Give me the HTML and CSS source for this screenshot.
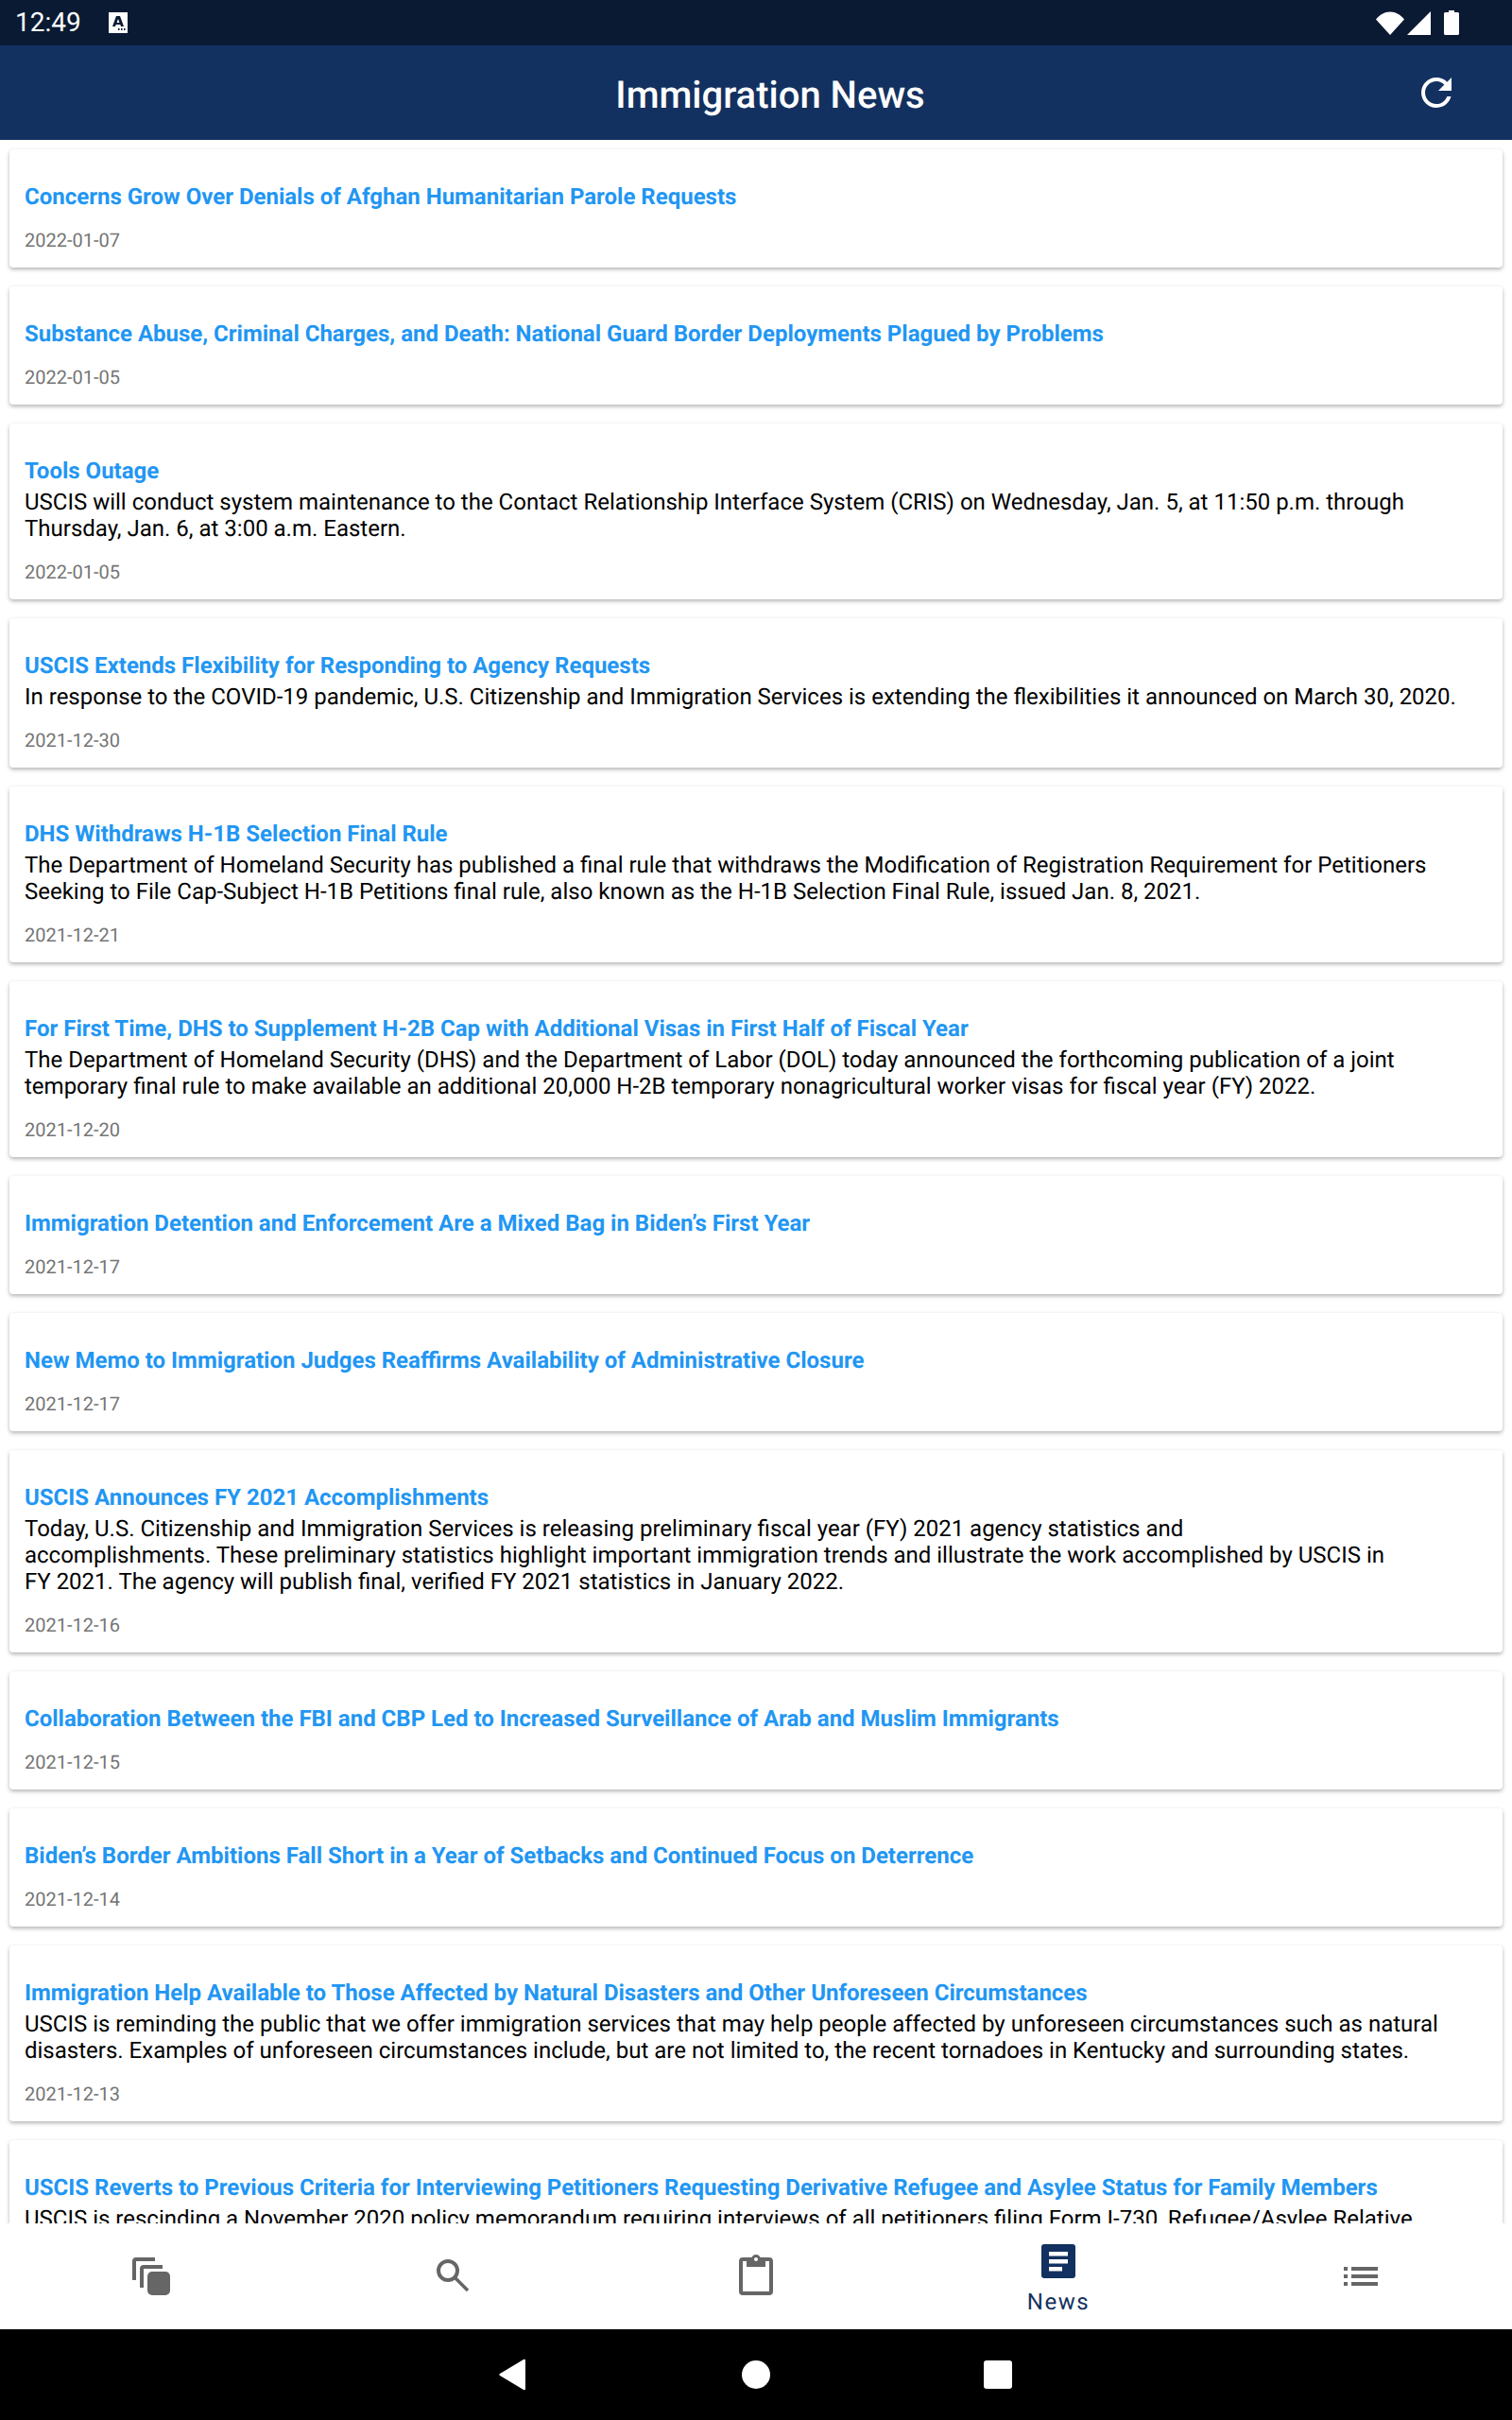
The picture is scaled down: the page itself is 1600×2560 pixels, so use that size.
FILE: index.html
```html
<!DOCTYPE html>
<html lang="en">
<head>
  <meta charset="UTF-8">
  <meta name="viewport" content="width=device-width, initial-scale=1.0">
  <title>Immigration News</title>
  <link rel="stylesheet" href="styles.css">
</head>
<body>
  <div class="app">
    <div class="status-bar">
      <span class="clock">12:49</span>
      <svg class="status-a" width="20" height="22" viewBox="0 0 20 22">
        <path fill="#fff" d="M0 0h20v22H0z"/>
        <path fill="#0a1a33" d="M8 4h4l4 11h-3l-.7-2H7.700L7 15H4zm2 3-1.500 4h3z"/>
        <path fill="#0a1a33" d="M10 17h1.500v2H10zm3 0h1.500v2H13zm3 0h1.500v2H16z"/>
      </svg>
      <div class="status-right">
        <svg width="30" height="25" viewBox="0 0 30 25"><path fill="#fff" d="M0 8.500C4 3.500 9 .5 15 .5s11 3 15 8L15 25z"/></svg>
        <svg width="25" height="25" viewBox="0 0 25 25"><path fill="#fff" d="M25 0v25H0z"/></svg>
        <svg width="16" height="26" viewBox="0 0 16 26"><path fill="#fff" d="M5 0h6v2h3.500c.8 0 1.500.7 1.500 1.500v21c0 .8-.7 1.500-1.500 1.500h-13C.7 26 0 25.300 0 24.500v-21C0 2.700.7 2 1.500 2H5z"/></svg>
      </div>
    </div>

    <header class="app-header">
      <h1 class="app-title">Immigration News</h1>
      <svg class="refresh" width="48" height="48" viewBox="0 0 24 24"><path fill="#fff" d="M17.650 6.350C16.200 4.900 14.210 4 12 4c-4.420 0-7.990 3.580-7.990 8s3.570 8 7.990 8c3.730 0 6.840-2.550 7.730-6h-2.080c-.82 2.330-3.040 4-5.650 4-3.310 0-6-2.690-6-6s2.690-6 6-6c1.660 0 3.140.69 4.220 1.780L13 11h7V4l-2.350 2.350z"/></svg>
    </header>

    <main class="news-list">
      <article class="news-card">
        <h2 class="news-title">Concerns Grow Over Denials of Afghan Humanitarian Parole Requests</h2>
        <div class="news-date">2022-01-07</div>
      </article>
      <article class="news-card">
        <h2 class="news-title">Substance Abuse, Criminal Charges, and Death: National Guard Border Deployments Plagued by Problems</h2>
        <div class="news-date">2022-01-05</div>
      </article>
      <article class="news-card">
        <h2 class="news-title">Tools Outage</h2>
        <p class="news-body">USCIS will conduct system maintenance to the Contact Relationship Interface System (CRIS) on Wednesday, Jan. 5, at 11:50 p.m. through Thursday, Jan. 6, at 3:00 a.m. Eastern.</p>
        <div class="news-date">2022-01-05</div>
      </article>
      <article class="news-card">
        <h2 class="news-title">USCIS Extends Flexibility for Responding to Agency Requests</h2>
        <p class="news-body">In response to the COVID-19 pandemic, U.S. Citizenship and Immigration Services is extending the flexibilities it announced on March 30, 2020.</p>
        <div class="news-date">2021-12-30</div>
      </article>
      <article class="news-card">
        <h2 class="news-title">DHS Withdraws H-1B Selection Final Rule</h2>
        <p class="news-body">The Department of Homeland Security has published a final rule that withdraws the Modification of Registration Requirement for Petitioners Seeking to File Cap-Subject H-1B Petitions final rule, also known as the H-1B Selection Final Rule, issued Jan. 8, 2021.</p>
        <div class="news-date">2021-12-21</div>
      </article>
      <article class="news-card">
        <h2 class="news-title">For First Time, DHS to Supplement H-2B Cap with Additional Visas in First Half of Fiscal Year</h2>
        <p class="news-body">The Department of Homeland Security (DHS) and the Department of Labor (DOL) today announced the forthcoming publication of a joint temporary final rule to make available an additional 20,000 H-2B temporary nonagricultural worker visas for fiscal year (FY) 2022.</p>
        <div class="news-date">2021-12-20</div>
      </article>
      <article class="news-card">
        <h2 class="news-title">Immigration Detention and Enforcement Are a Mixed Bag in Biden’s First Year</h2>
        <div class="news-date">2021-12-17</div>
      </article>
      <article class="news-card">
        <h2 class="news-title">New Memo to Immigration Judges Reaffirms Availability of Administrative Closure</h2>
        <div class="news-date">2021-12-17</div>
      </article>
      <article class="news-card">
        <h2 class="news-title">USCIS Announces FY 2021 Accomplishments</h2>
        <p class="news-body">Today, U.S. Citizenship and Immigration Services is releasing preliminary fiscal year (FY) 2021 agency statistics and<br>accomplishments. These preliminary statistics highlight important immigration trends and illustrate the work accomplished by USCIS in FY&nbsp;2021. The agency will publish final, verified FY 2021 statistics in January 2022.</p>
        <div class="news-date">2021-12-16</div>
      </article>
      <article class="news-card">
        <h2 class="news-title">Collaboration Between the FBI and CBP Led to Increased Surveillance of Arab and Muslim Immigrants</h2>
        <div class="news-date">2021-12-15</div>
      </article>
      <article class="news-card">
        <h2 class="news-title">Biden’s Border Ambitions Fall Short in a Year of Setbacks and Continued Focus on Deterrence</h2>
        <div class="news-date">2021-12-14</div>
      </article>
      <article class="news-card">
        <h2 class="news-title">Immigration Help Available to Those Affected by Natural Disasters and Other Unforeseen Circumstances</h2>
        <p class="news-body">USCIS is reminding the public that we offer immigration services that may help people affected by unforeseen circumstances such as natural disasters. Examples of unforeseen circumstances include, but are not limited to, the recent tornadoes in Kentucky and surrounding states.</p>
        <div class="news-date">2021-12-13</div>
      </article>
      <article class="news-card">
        <h2 class="news-title">USCIS Reverts to Previous Criteria for Interviewing Petitioners Requesting Derivative Refugee and Asylee Status for Family Members</h2>
        <p class="news-body">USCIS is rescinding a November 2020 policy memorandum requiring interviews of all petitioners filing Form I-730, Refugee/Asylee Relative Petition.</p>
        <div class="news-date">2021-12-10</div>
      </article>
    </main>

    <nav class="tab-bar">
      <div class="tab">
        <svg width="48" height="48" viewBox="0 0 48 48"><path fill="#666" d="M28 4v4H8v20H4V8c0-2.500 1.500-4 4-4z"/><path fill="#666" d="M36 12v4H16v20h-4V16c0-2.500 1.500-4 4-4z"/><rect fill="#666" x="20" y="19" width="24" height="25" rx="5"/></svg>
      </div>
      <div class="tab">
        <svg width="48" height="48" viewBox="0 0 48 48"><circle cx="18" cy="18" r="10" fill="none" stroke="#666" stroke-width="4"/><path fill="none" stroke="#666" stroke-width="3.500" d="M25 25l14 14"/></svg>
      </div>
      <div class="tab">
        <svg width="48" height="48" viewBox="0 0 48 48"><rect x="8" y="6" width="32" height="36" rx="2" fill="none" stroke="#666" stroke-width="4"/><path fill="#666" d="M14 6h5a5 5 0 0 1 10 0h5v8H14z"/><circle cx="24" cy="6" r="2" fill="#fff"/></svg>
      </div>
      <div class="tab tab-active">
        <svg width="48" height="48" viewBox="0 0 48 48"><path fill="#133160" d="M9 6h30c2 0 3 1 3 3v30c0 2-1 3-3 3H9c-2 0-3-1-3-3V9c0-2 1-3 3-3z"/><path fill="#fff" d="M14 14h20v4.500H14zm0 8h20v4.500H14zm0 8h14v4.500H14z"/></svg>
        <span class="tab-label">News</span>
      </div>
      <div class="tab">
        <svg width="48" height="48" viewBox="0 0 48 48"><path fill="#666" d="M6 14h4v4H6zm8 0h28v4H14zM6 22h4v4H6zm8 0h28v4H14zM6 30h4v4H6zm8 0h28v4H14z"/></svg>
      </div>
    </nav>

    <div class="system-nav">
      <svg width="30" height="34" viewBox="0 0 30 34"><path fill="#fff" d="M27 1c1-.7 2 0 2 1v30c0 1-1 1.700-2 1L2 18c-1-.6-1-1.400 0-2z"/></svg>
      <svg width="30" height="30" viewBox="0 0 30 30"><circle fill="#fff" cx="15" cy="15" r="15"/></svg>
      <svg width="30" height="30" viewBox="0 0 30 30"><rect fill="#fff" width="30" height="30" rx="3"/></svg>
    </div>
  </div>
</body>
</html>
```

FILE: styles.css
```css
* {
  box-sizing: border-box;
}

body {
  margin: 0;
  font-family: Roboto, "Liberation Sans", sans-serif;
  text-rendering: geometricPrecision;
  background: #fff;
}

.app {
  display: flex;
  flex-direction: column;
  width: 1600px;
  height: 2560px;
  overflow: hidden;
}

/* status bar */
.status-bar {
  display: flex;
  align-items: center;
  flex: none;
  height: 48px;
  padding: 0 56px 0 16px;
  background: #0a1a33;
  color: #fff;
}

.clock {
  font-size: 28px;
  line-height: 48px;
}

.status-a {
  margin-left: 29px;
}

.status-right {
  display: flex;
  align-items: center;
  gap: 3px;
  margin-left: auto;

  & svg:last-child {
    margin-left: 11px;
  }
}

/* header */
.app-header {
  display: flex;
  align-items: center;
  flex: none;
  height: 100px;
  background: #133160;
}

.app-title {
  flex: 1;
  margin: 0;
  padding: 6px 0 0 134px;
  font-size: 40px;
  font-weight: 500;
  line-height: 94px;
  text-align: center;
  color: #fff;
}

.refresh {
  margin-right: 56px;
}

/* list */
.news-list {
  flex: 1;
  min-height: 0;
  overflow: hidden;
  padding: 10px 10px 0;
}

.news-card {
  margin-bottom: 20px;
  padding: 36px 40px 17px 16px;
  background: #fff;
  border-radius: 4px;
  box-shadow: 0 2px 4px rgba(0, 0, 0, 0.3);
}

.news-title {
  margin: 0;
  font-size: 24px;
  font-weight: 700;
  line-height: 28px;
  color: #2196f3;
}

.news-body {
  margin: 5px 0 0;
  font-size: 24px;
  line-height: 28px;
  color: #000;
}

.news-date {
  margin-top: 20px;
  font-size: 20px;
  line-height: 24px;
  color: #757575;
}

/* bottom tabs */
.tab-bar {
  display: grid;
  grid-template-columns: repeat(5, 1fr);
  flex: none;
  height: 112px;
  background: #fff;
}

.tab {
  display: flex;
  flex-direction: column;
  align-items: center;
  justify-content: center;
}

.tab-active {
  justify-content: flex-start;
  padding-top: 16px;
}

.tab-label {
  margin-top: 5px;
  font-size: 24px;
  line-height: 28px;
  letter-spacing: 1.5px;
  color: #133160;
}

/* android nav */
.system-nav {
  display: flex;
  align-items: center;
  flex: none;
  height: 96px;
  padding-left: 527px;
  background: #000;

  & svg:nth-child(2) {
    margin-left: 228px;
  }

  & svg:nth-child(3) {
    margin-left: 226px;
  }
}
```
